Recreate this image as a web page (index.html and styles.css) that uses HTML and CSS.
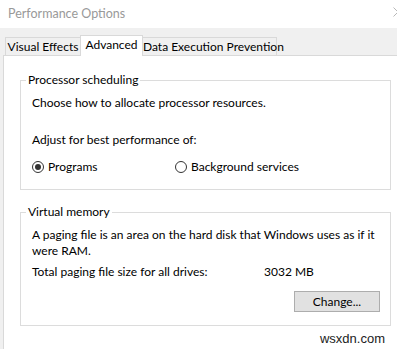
FILE: index.html
```html
<!DOCTYPE html>
<html>
<head>
<meta charset="utf-8">
<link rel="stylesheet" href="styles.css">
</head>
<body>
<div class="window">
  <div class="titlebar">
    <span class="title">Performance Options</span>
    <svg class="close" width="10" height="10" viewBox="0 0 10 10"><path d="M0.5 0.5L9.5 9.5M0.5 9.5L9.5 0.5" stroke="#b8b8b8" stroke-width="1" fill="none"/></svg>
  </div>
  <div class="client">
    <div class="tabs">
      <div class="tab tab-ve">Visual Effects</div>
      <div class="tab tab-adv active">Advanced</div>
      <div class="tab tab-dep">Data Execution Prevention</div>
    </div>
    <div class="panel">
      <fieldset class="group group-proc">
        <legend>Processor scheduling</legend>
        <div class="body">
          <div class="line">Choose how to allocate processor resources.</div>
          <div class="line adjust">Adjust for best performance of:</div>
          <div class="radios">
            <label class="radio radio-prog"><span class="dot checked"></span>Programs</label>
            <label class="radio"><span class="dot"></span>Background services</label>
          </div>
        </div>
      </fieldset>
      <fieldset class="group group-vm">
        <legend>Virtual memory</legend>
        <div class="body">
          <div class="line">A paging file is an area on the hard disk that Windows uses as if it were RAM.</div>
          <div class="total">
            <span class="total-label">Total paging file size for all drives:</span>
            <span class="total-value">3032 MB</span>
          </div>
          <div class="actions">
            <button class="btn">Change...</button>
          </div>
        </div>
      </fieldset>
    </div>
  </div>
  <div class="watermark">wsxdn.com</div>
</div>
</body>
</html>
```

FILE: styles.css
```css
html, body {
  margin: 0;
  padding: 0;
}
body {
  width: 397px;
  height: 349px;
  overflow: hidden;
  background: #f0f0f0;
  font-family: Lato, "Noto Sans", sans-serif;
  font-size: 12px;
  color: #000;
}
.window {
  position: relative;
  width: 397px;
  height: 349px;
  overflow: hidden;
  display: flex;
  flex-direction: column;
}
.titlebar {
  height: 28px;
  background: #fff;
  display: flex;
  align-items: center;
  padding-left: 8px;
  position: relative;
  flex: none;
}
.title {
  color: #999;
  font-size: 12.5px;
  line-height: 16px;
  margin-top: -1px;
}
.close {
  position: absolute;
  left: 393px;
  top: 7px;
}
.client {
  flex: 1;
  display: flex;
  flex-direction: column;
  padding: 7px 0 0 3px;
  width: 420px;
}
.tabs {
  display: flex;
  align-items: flex-end;
  padding-left: 2px;
  height: 20px;
  flex: none;
}
.tab {
  box-sizing: border-box;
  height: 18px;
  border: 1px solid #d9d9d9;
  border-bottom: none;
  background: #f0f0f0;
  line-height: 18px;
  text-align: center;
  white-space: nowrap;
}
.tab-ve { width: 75px; border-right: none; }
.tab-adv { width: 63px; }
.tab-dep { width: 134px; border-left: none; }
.tab.active {
  height: 21px;
  background: #fff;
  margin-bottom: -1px;
  position: relative;
  line-height: 17px;
}
.panel {
  flex: 1;
  background: #fff;
  border-top: 1px solid #d9d9d9;
  border-left: 1px solid #d9d9d9;
  padding-left: 16px;
}
.group {
  box-sizing: border-box;
  width: 371px;
  margin: 0;
  border: 1px solid #dcdcdc;
  padding: 7px 10px 14px 5px;
  min-width: 0;
}
.group-proc { margin-top: 16px; }
.group-vm { margin-top: 14px; padding-bottom: 13px; }
legend {
  padding: 0 2px;
  line-height: 16px;
}
.body {
  padding-left: 6px;
}
.line {
  line-height: 16px;
}
.adjust {
  margin-top: 21px;
}
.radios {
  display: flex;
  margin-top: 11px;
  line-height: 16px;
}
.radio {
  display: flex;
  align-items: center;
}
.radio-prog {
  width: 143px;
}
.dot {
  box-sizing: border-box;
  width: 12px;
  height: 12px;
  border: 1px solid #333;
  border-radius: 50%;
  margin-right: 4px;
  display: flex;
  align-items: center;
  justify-content: center;
}
.dot.checked::after {
  content: "";
  width: 6px;
  height: 6px;
  border-radius: 50%;
  background: #333;
}
.total {
  display: flex;
  margin-top: 5px;
  line-height: 16px;
}
.total-label {
  width: 232px;
}
.actions {
  display: flex;
  justify-content: flex-end;
  margin-top: 11px;
}
.btn {
  box-sizing: border-box;
  width: 86px;
  height: 21px;
  background: #e1e1e1;
  border: 1px solid #adadad;
  font-family: inherit;
  font-size: 12px;
  color: #000;
  padding: 0;
  line-height: 18px;
}
.watermark {
  position: absolute;
  right: 12px;
  bottom: 3px;
  font-family: "Liberation Sans", Arial, sans-serif;
  font-size: 13px;
  color: #222;
}
```
